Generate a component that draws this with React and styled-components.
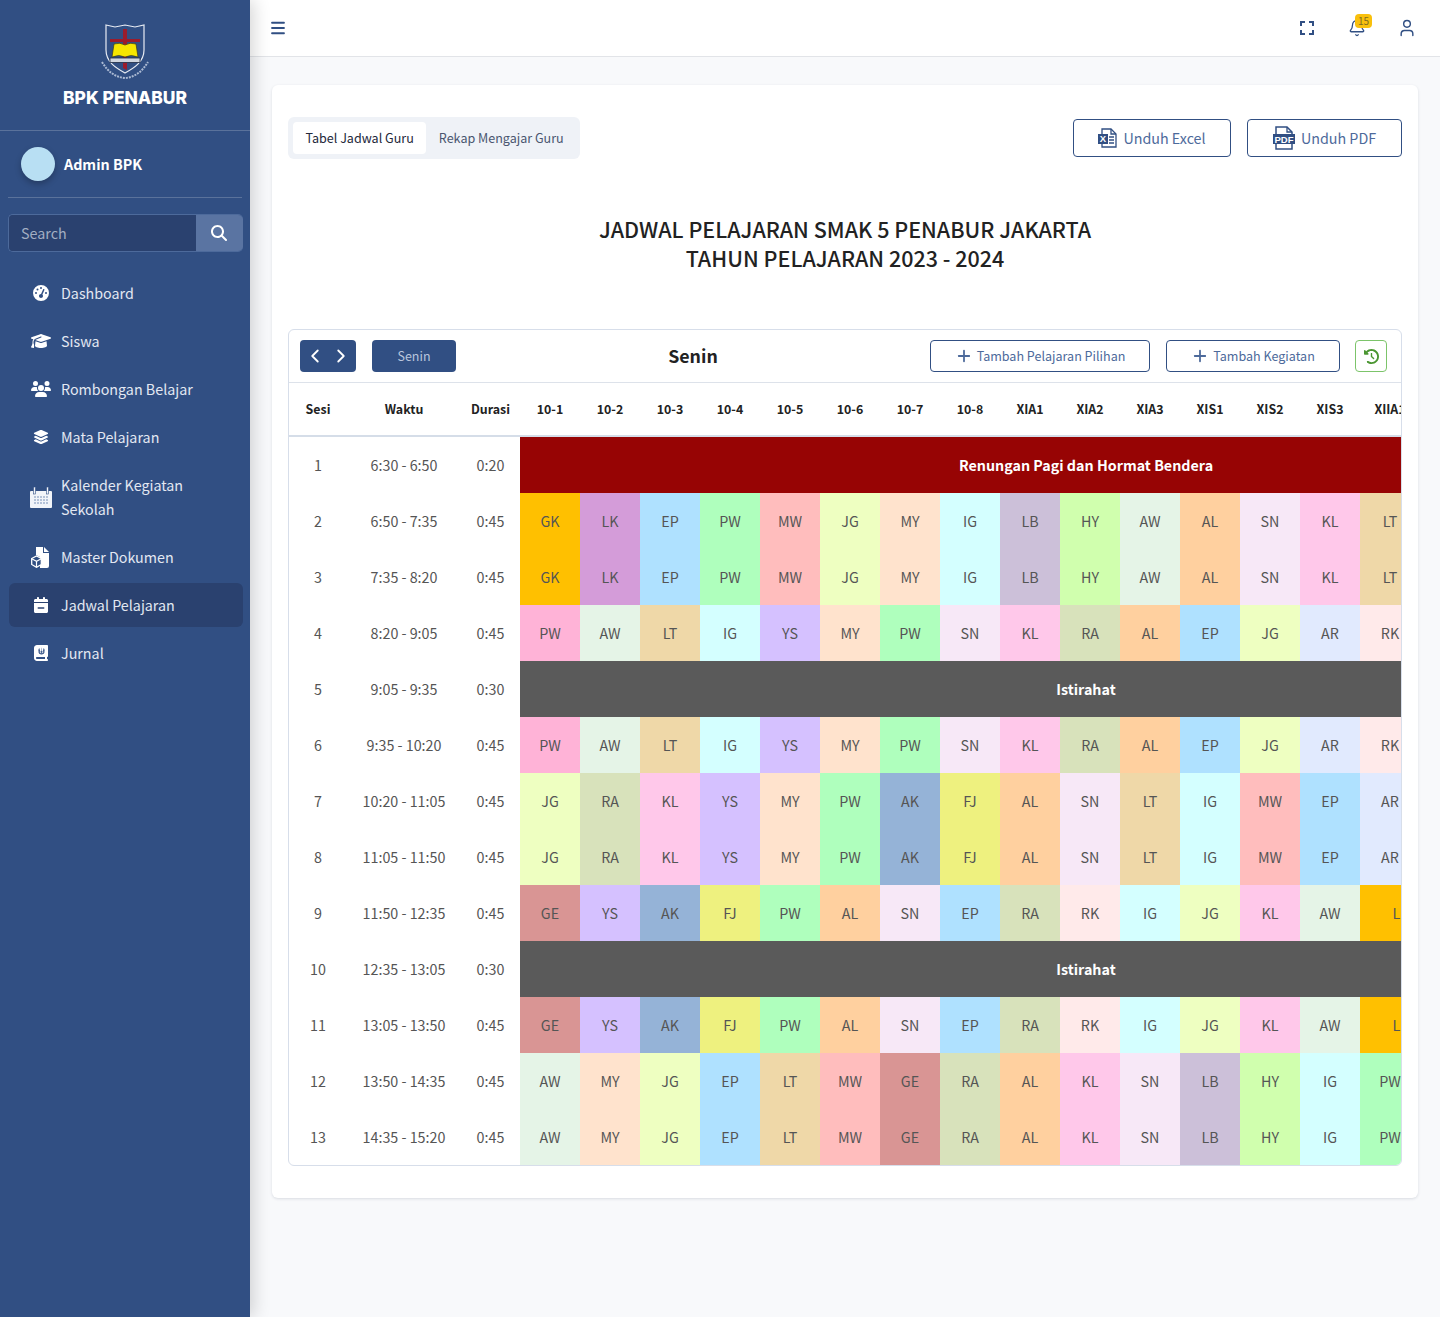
import React from 'react';
import styled, { createGlobalStyle } from 'styled-components';
import { FaGaugeHigh, FaGraduationCap, FaUsers, FaLayerGroup, FaCalendarMinus, FaBookJournalWhills, FaClockRotateLeft, FaMagnifyingGlass } from 'react-icons/fa6';
import { ChevronLeft, ChevronRight, Plus, Menu, Bell, User } from 'lucide-react';

const Global = createGlobalStyle`
  html, body { margin: 0; padding: 0; background: #f8f9fb; }
  * { box-sizing: border-box; }
  svg { flex: none; }
  body { font-family: "Noto Sans CJK SC", "Noto Sans", sans-serif; font-size: 14.3px; color: #222; }
`;
const Shell = styled.div`display: flex; min-height: 1317px; width: 1440px; overflow: hidden;`;
const Sidebar = styled.aside`
  width: 250px; flex: none; background: #314f83; position: relative; z-index: 2;
  box-shadow: 4px 0 16px rgba(0,0,0,.16);
`;
const Brand = styled.div`
  height: 131px; border-bottom: 1px solid rgba(255,255,255,.2);
  display: flex; flex-direction: column; align-items: center; padding-top: 24px;
`;
const BrandName = styled.div`
  font-family: Inter, sans-serif; font-weight: 800; font-size: 17.4px; line-height: 20px; color: #fff;
  margin-top: 8px;
`;
const UserPanel = styled.div`
  margin: 0 8px; height: 67px; border-bottom: 1px solid rgba(255,255,255,.2);
  display: flex; align-items: center; gap: 9px; padding-left: 13px;
`;
const Avatar = styled.div`
  width: 34px; height: 34px; border-radius: 50%; background: #b8dff3;
  box-shadow: 0 3px 6px rgba(0,0,0,.25);
`;
const UserName = styled.div`font-weight: 700; font-size: 14.3px; color: #fff; line-height: 24px;`;
const Search = styled.div`
  display: flex; height: 38px; margin: 16px 7px 19px 8px; border-radius: 5px; overflow: hidden;
  border: 1px solid #4d6a9b; border-right: 0;
`;
const SearchInput = styled.div`
  flex: 1; background: #2a416f; color: #a3aec2; font-size: 14.3px; line-height: 36px; padding-left: 12px;
`;
const SearchBtn = styled.div`
  width: 47px; background: #5a74a2; color: #fff; display: flex; align-items: center; justify-content: center;
  font-size: 16px; padding-right: 2px;
`;
const Nav = styled.nav`display: flex; flex-direction: column; gap: 4px; padding: 0 7px 0 9px;`;
const NavItem = styled.div`
  display: flex; align-items: center; padding: 10px 0 10px 20px; border-radius: 6px;
  color: #e3e8f2; font-size: 14.3px; line-height: 24px;
  background: ${p => (p.$active ? '#2a416f' : 'transparent')};
`;
const NavIcon = styled.span`
  width: 24px; margin-right: 8px; display: flex; justify-content: center; color: #fff; font-size: 16px; flex: none;
`;
const NavLabel = styled.span`max-width: 140px;`;
const Main = styled.main`flex: 1; min-width: 0; display: flex; flex-direction: column;`;
const Topbar = styled.header`
  height: 57px; background: #fff; border-bottom: 1px solid #e2e4e8; display: flex; align-items: center;
  padding: 0 25px 0 19px; color: #314f83;
`;
const TopActions = styled.div`margin-left: auto; display: flex; align-items: center; gap: 34px;`;
const TopIcon = styled.span`position: relative; display: flex; width: 16px; height: 16px; align-items: center; justify-content: center;`;
const Badge = styled.span`
  position: absolute; left: 6px; top: -6px; width: 17px; height: 14px; border-radius: 4px; background: #f9c00c;
  color: #7d6b22; font-size: 10px; line-height: 14px; text-align: center;
`;
const Card = styled.section`
  margin: 28px 22px 0; width: 1146px; height: 1113px; background: #fff; border-radius: 6px; padding: 32px 16px 0 16px;
  box-shadow: 0 1px 3px rgba(30,40,70,.14);
`;
const CardTop = styled.div`display: flex; align-items: center; height: 42px;`;
const Tabs = styled.div`
  display: flex; padding: 5px; background: #eff2f7; border-radius: 6px; height: 42px; width: 292px;
`;
const Tab = styled.div`
  font-size: 12.55px; line-height: 32px; border-radius: 4px; padding: 0 12.5px; white-space: nowrap;
  color: ${p => (p.$active ? '#23283a' : '#4a5670')};
  background: ${p => (p.$active ? '#fff' : 'transparent')};
`;
const TopButtons = styled.div`margin-left: auto; display: flex; gap: 16px;`;
const OutlineBtn = styled.div`
  height: ${p => p.$h || 38}px; width: ${p => p.$w}px; border: 1px solid #314f83; border-radius: 4px; display: flex;
  align-items: center; justify-content: center; gap: ${p => p.$gap}px; color: #4d6a9b;
  font-size: ${p => p.$fs || 14.3}px; white-space: nowrap; background: #fff;
`;
const BtnLabel = styled.span`margin-top: -2px;`;
const PageTitle = styled.h1`
  margin: 55px 0 57px; text-align: center; font-size: 21.5px; font-weight: 500; line-height: 29px; color: #222;
`;
const TableBox = styled.div`
  border: 1px solid #d7deea; border-radius: 6px; overflow: hidden; width: 1114px; background: #fff;
`;
const TableBar = styled.div`
  height: 53px; border-bottom: 1px solid #dde2ea; display: flex; align-items: center; padding: 0 14px 0 11px;
`;
const ArrowGroup = styled.div`
  width: 56px; height: 32px; background: #314f83; border-radius: 4px; color: #fff; display: flex;
  align-items: center; justify-content: space-between; padding: 0 4px 0 4px;
`;
const DayBtn = styled.div`
  width: 84px; height: 32px; background: #314f83; color: #b9c6dd; border-radius: 4px; margin-left: 16px;
  font-size: 12.5px; line-height: 31px; text-align: center;
`;
const DayTitle = styled.div`flex: 1; text-align: center; font-size: 17.8px; font-weight: 700; color: #222; margin-top: -2px;`;
const BarActions = styled.div`display: flex; align-items: center; gap: 16px;`;
const HistoryBtn = styled.div`
  width: 32px; height: 32px; margin-left: -1px; border: 1px solid #7cc46a; border-radius: 4px; color: #4b9632;
  display: flex; align-items: center; justify-content: center; font-size: 15px;
`;
const Table = styled.table`
  border-collapse: separate; border-spacing: 0; table-layout: fixed; width: 1363px;
`;
const HeadCell = styled.th`
  height: 54px; padding: 0; border-bottom: 2px solid #d5dde8; font-size: 12.4px; font-weight: 700; color: #222;
  text-align: center; white-space: nowrap; overflow: hidden;
`;
const InfoCell = styled.td`
  height: 56px; padding: 0; text-align: center; font-size: 14.3px; line-height: 20px; color: #555; white-space: nowrap;
`;
const CodeCell = styled.td`
  height: 56px; padding: 0; text-align: center; font-size: 14.3px; line-height: 20px; color: #555; white-space: nowrap;
  background: ${p => p.$bg || 'transparent'};
`;
const BreakCell = styled.td`
  height: 56px; padding: 0; text-align: center; font-size: 14.3px; line-height: 20px; font-weight: 700; color: #fff;
  background: ${p => p.$bg};
`;

const colors = {
  GK: '#ffc000', LK: '#d49cd9', EP: '#afe1ff', PW: '#afffbd', MW: '#ffbdbd', JG: '#eeffc1', MY: '#ffe3cd',
  IG: '#d4ffff', LB: '#ccc0d9', HY: '#d0ffae', AW: '#e5f4e7', AL: '#ffd09f', SN: '#f7e8f7', KL: '#ffc8ea',
  LT: '#efd8a8', AR: '#e1eafe', RK: '#ffeaea', YS: '#d5c1ff', RA: '#d8e2bb', AK: '#95b3d7', FJ: '#eef17f',
  GE: '#d99594',
};
const PINK = '#ffb3d7';
const cols = ['10-1','10-2','10-3','10-4','10-5','10-6','10-7','10-8','XIA1','XIA2','XIA3','XIS1','XIS2','XIS3','XIIA1','XIIA2','XIIA3','XIIS1','XIIS2'];
const R2 = 'GK LK EP PW MW JG MY IG LB HY AW AL SN KL LT'.split(' ');
const R4 = 'PW AW LT IG YS MY PW SN KL RA AL EP JG AR RK'.split(' ');
const R7 = 'JG RA KL YS MY PW AK FJ AL SN LT IG MW EP AR'.split(' ');
const R9 = 'GE YS AK FJ PW AL SN EP RA RK IG JG KL AW'.split(' ');
const R12 = 'AW MY JG EP LT MW GE RA AL KL SN LB HY IG PW'.split(' ');
const rows = [
  { n: 1, time: '6:30 - 6:50', dur: '0:20', label: 'Renungan Pagi dan Hormat Bendera', bg: '#970404' },
  { n: 2, time: '6:50 - 7:35', dur: '0:45', codes: R2 },
  { n: 3, time: '7:35 - 8:20', dur: '0:45', codes: R2 },
  { n: 4, time: '8:20 - 9:05', dur: '0:45', codes: R4, pinkFirst: true },
  { n: 5, time: '9:05 - 9:35', dur: '0:30', label: 'Istirahat', bg: '#5a5a5a' },
  { n: 6, time: '9:35 - 10:20', dur: '0:45', codes: R4, pinkFirst: true },
  { n: 7, time: '10:20 - 11:05', dur: '0:45', codes: R7 },
  { n: 8, time: '11:05 - 11:50', dur: '0:45', codes: R7 },
  { n: 9, time: '11:50 - 12:35', dur: '0:45', codes: R9, wide: true },
  { n: 10, time: '12:35 - 13:05', dur: '0:30', label: 'Istirahat', bg: '#5a5a5a' },
  { n: 11, time: '13:05 - 13:50', dur: '0:45', codes: R9, wide: true },
  { n: 12, time: '13:50 - 14:35', dur: '0:45', codes: R12 },
  { n: 13, time: '14:35 - 15:20', dur: '0:45', codes: R12 },
];

const Logo = () => (
  <svg width="48" height="56" viewBox="0 0 48 56">
    <path d="M5 1 L14 3 L24 1 L34 3 L43 1 L43 26 C43 38 33 44 24 49 C15 44 5 38 5 26 Z" fill="#314f83" stroke="#e8ecf3" strokeWidth="1.2"/>
    <path d="M22 5h4v10h13v3H26v28l-4-2V18H9v-3h13z" fill="#9b1c2c"/>
    <path d="M11 33 L13 20 Q19 18 24 21 Q29 18 35 20 L37 33 Q30 30 24 33 Q18 30 11 33Z" fill="#f6e600" stroke="#3b3a1a" strokeWidth=".7"/>
    <rect x="9" y="34" width="30" height="4.5" fill="#cfd5df" stroke="#1d2a44" strokeWidth=".8"/>
    <path d="M1 38 Q10 53 24 54 Q38 53 47 38" fill="none" stroke="#aab9d2" strokeWidth="2" strokeDasharray="2 1"/>
  </svg>
);
const CalendarIcon = () => (
  <svg width="22" height="21" viewBox="0 0 22 21" fill="#f1f4f9">
    <rect x="0" y="4" width="22" height="17" rx="1"/>
    <rect x="3.5" y="0" width="2" height="7" fill="#f1f4f9" stroke="#314f83" strokeWidth=".6"/>
    <rect x="16.5" y="0" width="2" height="7" fill="#f1f4f9" stroke="#314f83" strokeWidth=".6"/>
    {[0,1,2].map(r => [0,1,2,3,4].map(c => (
      <rect key={`${r}${c}`} x={4 + c * 3} y={9 + r * 3} width="2" height="2" fill="#b4c2d8"/>
    )))}
  </svg>
);
const DocBoxIcon = () => (
  <svg width="20" height="21" viewBox="0 0 20 21">
    <path d="M5 0h7v6h6v13a2 2 0 0 1-2 2H9V10L5 8z" fill="#fff"/>
    <path d="M13 0l5 5h-5z" fill="#fff"/>
    <path d="M0.7 11.5 L5.5 9 L10.3 11.5 V17.5 L5.5 20.3 L0.7 17.5Z" fill="#314f83" stroke="#fff" strokeWidth="1.3"/>
    <path d="M0.7 11.7 L5.5 14.2 L10.3 11.7 M5.5 14.2V20" fill="none" stroke="#fff" strokeWidth="1.2"/>
  </svg>
);
const FullIcon = () => (
  <svg width="14" height="14" viewBox="0 0 14 14" fill="none" stroke="#314f83" strokeWidth="2">
    <path d="M1 5V1h4M9 1h4v4M13 9v4H9M5 13H1V9"/>
  </svg>
);
const ExcelIcon = () => (
  <svg width="19" height="20" viewBox="0 0 19 20" fill="none">
    <path d="M4 6V1h9l5 5v13H4v-3" stroke="#314f83" strokeWidth="1.3"/>
    <path d="M13 1v5h5M11 9h5M11 12h5M11 15h5" stroke="#314f83" strokeWidth="1.3"/>
    <rect x="0" y="6" width="10" height="10" fill="#314f83"/>
    <text x="5" y="14.2" fontSize="9.5" fontWeight="700" fill="#fff" textAnchor="middle" fontFamily="Liberation Sans, sans-serif">X</text>
  </svg>
);
const PdfIcon = () => (
  <svg width="23" height="24" viewBox="0 0 23 24" fill="none">
    <path d="M3 8V1h11l5 5v2M3 18v5h16v-5" stroke="#314f83" strokeWidth="1.5"/>
    <path d="M14 1v5h5" stroke="#314f83" strokeWidth="1.3"/>
    <rect x="0" y="8" width="22" height="10" fill="#314f83"/>
    <text x="11" y="16.6" fontSize="9.5" fontWeight="700" fill="#fff" textAnchor="middle" fontFamily="Liberation Sans, sans-serif">PDF</text>
  </svg>
);

const nav = [
  { label: 'Dashboard', icon: <FaGaugeHigh /> },
  { label: 'Siswa', icon: <FaGraduationCap size={20} /> },
  { label: 'Rombongan Belajar', icon: <FaUsers size={20} /> },
  { label: 'Mata Pelajaran', icon: <FaLayerGroup /> },
  { label: 'Kalender Kegiatan Sekolah', icon: <CalendarIcon /> },
  { label: 'Master Dokumen', icon: <DocBoxIcon /> },
  { label: 'Jadwal Pelajaran', icon: <FaCalendarMinus />, active: true },
  { label: 'Jurnal', icon: <FaBookJournalWhills /> },
];

export default function App() {
  return (
    <Shell>
      <Global />
      <Sidebar>
        <Brand>
          <Logo />
          <BrandName>BPK PENABUR</BrandName>
        </Brand>
        <UserPanel><Avatar /><UserName>Admin BPK</UserName></UserPanel>
        <Search>
          <SearchInput>Search</SearchInput>
          <SearchBtn><FaMagnifyingGlass /></SearchBtn>
        </Search>
        <Nav>
          {nav.map(({ label, icon, active }) => (
            <NavItem key={label} $active={active}>
              <NavIcon>{icon}</NavIcon>
              <NavLabel>{label}</NavLabel>
            </NavItem>
          ))}
        </Nav>
      </Sidebar>
      <Main>
        <Topbar>
          <Menu size={18} strokeWidth={2.4} />
          <TopActions>
            <TopIcon><FullIcon /></TopIcon>
            <TopIcon><Bell size={18} strokeWidth={1.7} /><Badge>15</Badge></TopIcon>
            <TopIcon><User size={20} strokeWidth={1.7} /></TopIcon>
          </TopActions>
        </Topbar>
        <Card>
          <CardTop>
            <Tabs>
              <Tab $active>Tabel Jadwal Guru</Tab>
              <Tab>Rekap Mengajar Guru</Tab>
            </Tabs>
            <TopButtons>
              <OutlineBtn $w={158} $gap={6}><ExcelIcon /><BtnLabel>Unduh Excel</BtnLabel></OutlineBtn>
              <OutlineBtn $w={155} $gap={5}><PdfIcon /><BtnLabel>Unduh PDF</BtnLabel></OutlineBtn>
            </TopButtons>
          </CardTop>
          <PageTitle>JADWAL PELAJARAN SMAK 5 PENABUR JAKARTA<br />TAHUN PELAJARAN 2023 - 2024</PageTitle>
          <TableBox>
            <TableBar>
              <ArrowGroup><ChevronLeft size={22} /><ChevronRight size={22} /></ArrowGroup>
              <DayBtn>Senin</DayBtn>
              <DayTitle>Senin</DayTitle>
              <BarActions>
                <OutlineBtn $w={220} $h={32} $fs={12.55} $gap={4}><Plus size={18} strokeWidth={2.4} /><BtnLabel>Tambah Pelajaran Pilihan</BtnLabel></OutlineBtn>
                <OutlineBtn $w={174} $h={32} $fs={12.55} $gap={4}><Plus size={18} strokeWidth={2.4} /><BtnLabel>Tambah Kegiatan</BtnLabel></OutlineBtn>
                <HistoryBtn><FaClockRotateLeft /></HistoryBtn>
              </BarActions>
            </TableBar>
            <Table>
              <colgroup>
                <col width="58" /><col width="114" /><col width="59" />
                {cols.map((c, i) => <col key={c} width={i === 18 ? 52 : 60} />)}
              </colgroup>
              <thead>
                <tr>
                  <HeadCell>Sesi</HeadCell><HeadCell>Waktu</HeadCell><HeadCell>Durasi</HeadCell>
                  {cols.map(c => <HeadCell key={c}>{c}</HeadCell>)}
                </tr>
              </thead>
              <tbody>
                {rows.map(r => (
                  <tr key={r.n}>
                    <InfoCell>{r.n}</InfoCell><InfoCell>{r.time}</InfoCell><InfoCell>{r.dur}</InfoCell>
                    {r.codes ? (
                      <>
                        {r.codes.map((c, i) => (
                          <CodeCell key={i} $bg={r.pinkFirst && i === 0 ? PINK : colors[c]}>{c}</CodeCell>
                        ))}
                        {r.wide && <CodeCell colSpan={2} $bg={colors.GK}>LINTAS I</CodeCell>}
                      </>
                    ) : (
                      <BreakCell colSpan={19} $bg={r.bg}>{r.label}</BreakCell>
                    )}
                  </tr>
                ))}
              </tbody>
            </Table>
          </TableBox>
        </Card>
      </Main>
    </Shell>
  );
}
